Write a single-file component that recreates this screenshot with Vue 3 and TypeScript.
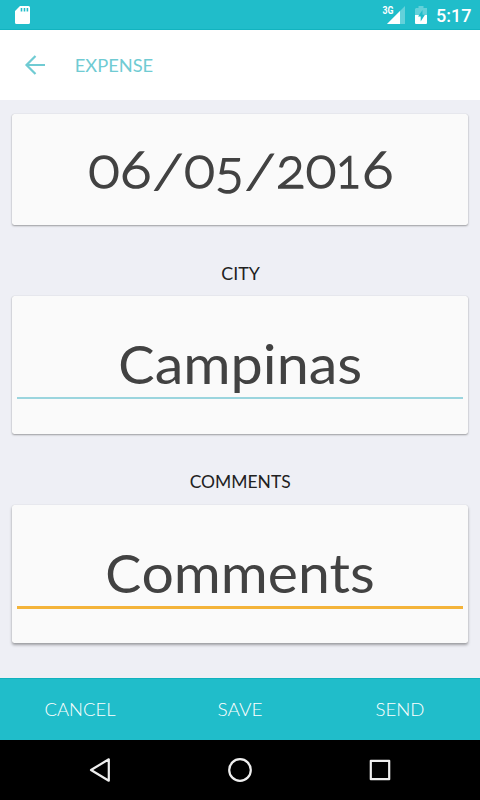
<script setup lang="ts">
interface Glyph { ch: string; x: number; w: number; size?: string }
const dateGlyphs: Glyph[] = [
  { ch: '0', x: 76, w: 31, size: 'round' },
  { ch: '6', x: 107.5, w: 31.5, size: 'tall' },
  { ch: '/', x: 139.4, w: 32, size: 'slash' },
  { ch: '0', x: 171.8, w: 30.5, size: 'round' },
  { ch: '5', x: 202.6, w: 29, size: 'low' },
  { ch: '/', x: 231.7, w: 32, size: 'slash' },
  { ch: '2', x: 263.8, w: 29, size: 'round' },
  { ch: '0', x: 293.2, w: 30.5, size: 'round' },
  { ch: '1', x: 324.1, w: 24, size: 'round' },
  { ch: '6', x: 349.5, w: 31.5, size: 'tall' },
]
interface Action { label: string; w: number }
const actions: Action[] = [
  { label: 'CANCEL', w: 71 },
  { label: 'SAVE', w: 45 },
  { label: 'SEND', w: 49 },
]
</script>

<template>
  <div class="screen">
    <div class="status">
      <svg class="sd" width="15" height="19" viewBox="0 0 15 19"><path fill="#fff" fill-rule="evenodd" d="M5 0H13.5Q15 0 15 1.5V16.5Q15 18 13.5 18H1.5Q0 18 0 16.5V5ZM5.7 2V5.5H7.3V2ZM8.7 2V5.5H10.3V2ZM11.6 2V5.5H13.2V2Z" /></svg>
      <svg class="signals" width="56" height="30" viewBox="0 0 56 30">
        <path d="M25 6V24H7Z" fill="#fff" fill-opacity=".3" />
        <path d="M20 11V24H7Z" fill="#fff" />
        <text x="2.5" y="14.3" class="network" textLength="11" lengthAdjust="spacingAndGlyphs">3G</text>
        <path d="M36 8h2.5V6h5v2H47v7H35V9Z" fill="#fff" fill-opacity=".3" />
        <path d="M35 15H47V23Q47 24 46 24H36Q35 24 35 23Z" fill="#fff" />
        <path d="M42.5 10L38 16.5H40.7V21.5L45 14.8H42.5Z" fill="#20bdca" />
      </svg>
      <span class="clock">5:17</span>
    </div>
    <header class="bar">
      <svg class="back" width="20" height="20" viewBox="0 0 20 20"><path d="M20 10H2M10.5 1L1.5 10L10.5 19" fill="none" stroke="#70cbd3" stroke-width="2.2" /></svg>
      <svg width="80" height="24" viewBox="0 0 80 24"><text class="title" x="-.3" y="18.8" textLength="78.5" lengthAdjust="spacingAndGlyphs">EXPENSE</text></svg>
    </header>
    <main class="content">
      <section class="card date-card">
        <svg width="456" height="111" viewBox="-.5 0 456 111">
          <text class="value old"><tspan v-for="(g, i) in dateGlyphs" :key="i" :class="g.size" :x="g.x" y="74.4" :textLength="g.w" lengthAdjust="spacingAndGlyphs">{{ g.ch }}</tspan></text>
        </svg>
      </section>
      <div class="label"><svg width="110" height="24" viewBox="0 0 110 24"><text x="36.3" y="18.5" textLength="38.5" lengthAdjust="spacingAndGlyphs">CITY</text></svg></div>
      <section class="card field">
        <svg width="446" height="101" viewBox="-.5 0 446 101"><text class="value" x="100.8" y="87.5" textLength="244" lengthAdjust="spacingAndGlyphs">C<tspan class="lower">ampinas</tspan></text></svg>
        <div class="line"></div>
      </section>
      <div class="label"><svg width="110" height="24" viewBox="0 0 110 24"><text x="4.7" y="18.1" textLength="101" lengthAdjust="spacingAndGlyphs">COMMENTS</text></svg></div>
      <section class="card field last">
        <svg width="446" height="101" viewBox="-.5 0 446 101"><text class="value" x="87.8" y="87.5" textLength="269.5" lengthAdjust="spacingAndGlyphs">C<tspan class="lower">omments</tspan></text></svg>
        <div class="line focus"></div>
      </section>
    </main>
    <footer class="actions">
      <button v-for="a in actions" :key="a.label"><svg width="80" height="24" viewBox="0 0 80 24"><text :x="40 - a.w / 2" y="18.5" :textLength="a.w" lengthAdjust="spacingAndGlyphs">{{ a.label }}</text></svg></button>
    </footer>
    <nav class="navigation">
      <svg width="480" height="60" viewBox="0 0 480 60" fill="none" stroke="#eee" stroke-width="2.2" stroke-linejoin="round">
        <path d="M108.8 19.3V40.7L91 30Z" /><circle cx="240" cy="30" r="10.8" /><rect x="370.8" y="20.8" width="18.4" height="18.4" />
      </svg>
    </nav>
  </div>
</template>

<style>
body { margin: 0; }
</style>
<style scoped>
.screen { width: 480px; height: 800px; display: flex; flex-direction: column; background: #eeeff5; font-family: Lato, "Liberation Sans", sans-serif; overflow: hidden; }
svg { display: block; overflow: visible; }
.status { height: 30px; flex: none; display: flex; background: #20bdca; box-sizing: border-box; border-bottom: 1px solid #12b3bf; padding-left: 15px; }
.sd { margin-top: 6px; }
.signals { margin-left: 350px; }
.network { font: 700 10px Roboto, sans-serif; fill: #fff; }
.clock { font: 500 18px/32px Roboto, sans-serif; color: #fff; white-space: nowrap; }
.bar { height: 70px; flex: none; background: #fff; display: flex; align-items: center; gap: 30px; padding-left: 25px; box-sizing: border-box; }
.title { font-size: 17.3px; fill: #70cbd3; }
.content { height: 577.5px; flex: none; box-sizing: border-box; padding: 13.5px 12px 0; display: flex; flex-direction: column; }
.card { flex: none; box-sizing: border-box; background: #fafafa; border-radius: 2.5px; box-shadow: 0 1px 2px rgba(0,0,0,.34), 0 0 1px rgba(0,0,0,.16); }
.date-card { height: 111.5px; }
.field { height: 138px; padding: 0 5px; }
.last { height: 137.5px; box-shadow: 0 2px 3px rgba(0,0,0,.34), 0 0 1px rgba(0,0,0,.16); }
.value { font-size: 52px; fill: #424242; }
.lower { font-size: 55px; }
.old { font-variant-numeric: oldstyle-nums; font-weight: 300; stroke: #424242; stroke-width: 1.7px; }
.round { font-size: 57px; }
.tall { font-size: 53px; }
.low { font-size: 53px; }
.slash { font-size: 48px; stroke-width: 1px; }
.line { height: 1.5px; background: #9bd5de; }
.line.focus { height: 2.5px; background: #f4b43a; }
.label { flex: none; display: flex; justify-content: center; height: 71px; padding-top: 36px; font-size: 17.3px; fill: #212121; box-sizing: border-box; }
.actions { height: 62.5px; flex: none; display: grid; grid-template-columns: repeat(3, 1fr); background: #20bdca; box-sizing: border-box; border-top: 1px solid #10b2be; }
.actions button { border: 0; padding: 0; background: transparent; display: flex; align-items: center; justify-content: center; font: 300 17.5px Lato, sans-serif; fill: #fff; }
.navigation { height: 60px; flex: none; background: #000; }
</style>
